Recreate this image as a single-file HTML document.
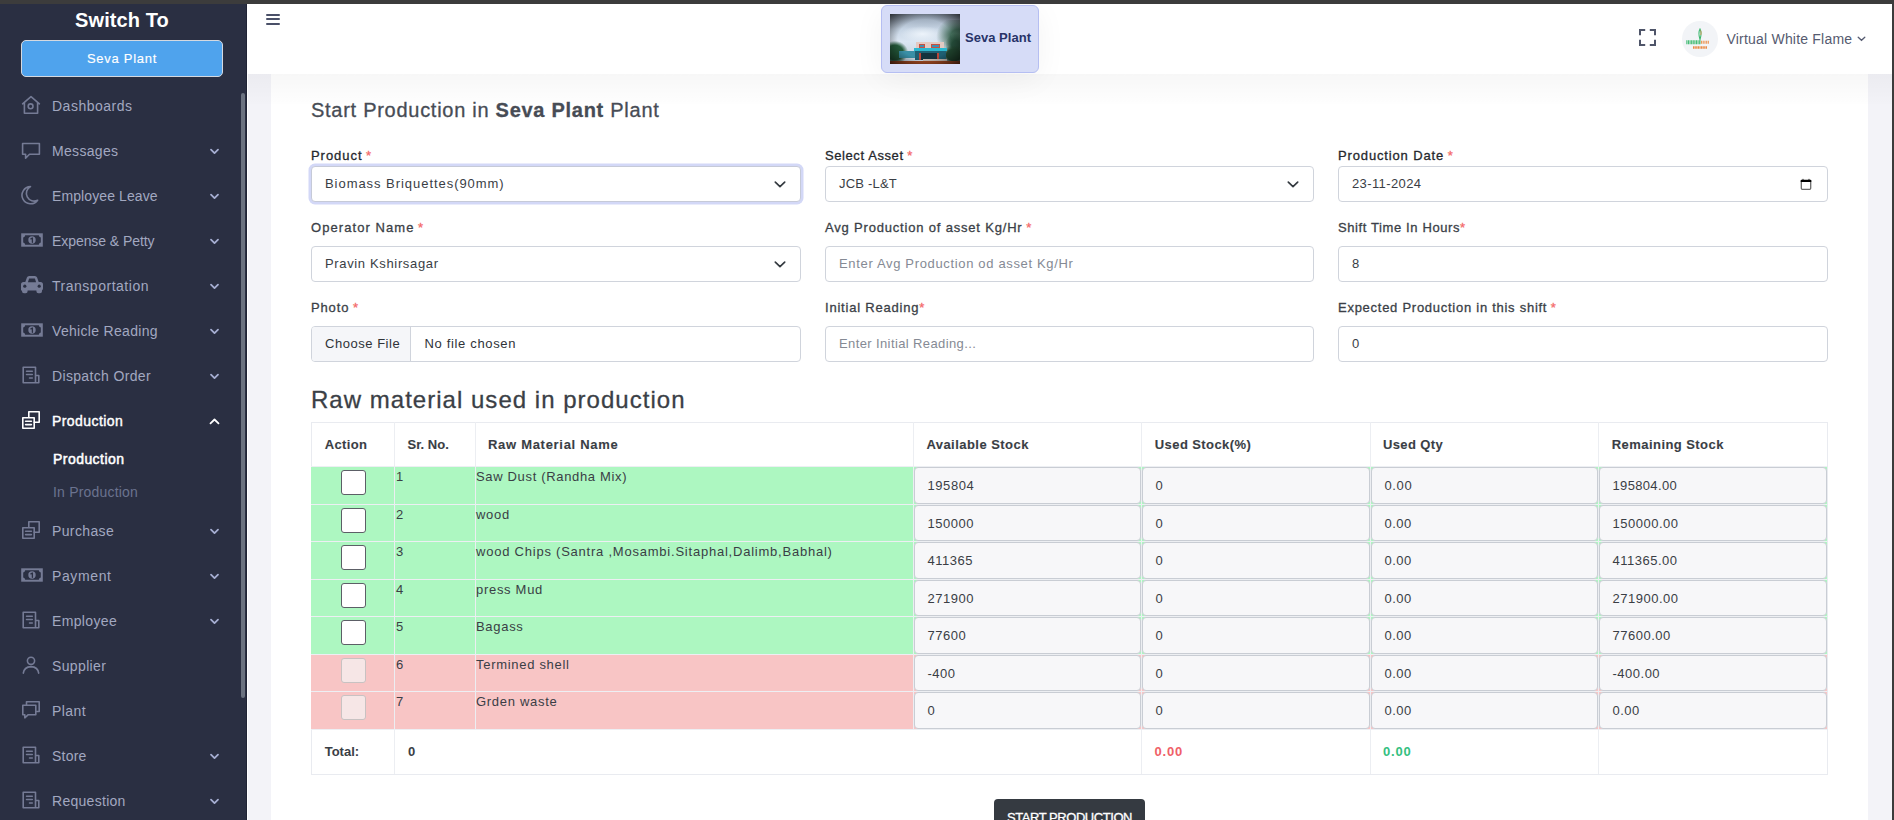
<!DOCTYPE html>
<html><head><meta charset="utf-8">
<style>
*{box-sizing:border-box;margin:0;padding:0}
html,body{width:1894px;height:820px;overflow:hidden;font-family:"Liberation Sans",sans-serif;background:#f3f3f8}
#topbar{position:absolute;left:0;top:0;width:1894px;height:4px;background:#3c3c3c;z-index:50}
#rightbar{position:absolute;left:1892px;top:0;width:2px;height:820px;background:#3c3c3c;z-index:50}
#side{position:absolute;left:0;top:4px;width:247px;height:816px;background:#2a2f42;z-index:10}
#side .title{position:absolute;left:0;width:244px;top:4px;text-align:center;color:#fff;font-weight:bold;font-size:20px;line-height:24px}
#side .btn{position:absolute;left:21px;top:36px;width:202px;height:37px;background:#4fa3ed;border:1px solid #d5d9e0;border-radius:5px;color:#fff;font-size:13px;text-align:center;line-height:35px;-webkit-text-stroke:0.15px #fff}
#side .thumb{position:absolute;left:241px;top:89px;width:4px;height:605px;background:#6b7280;border-radius:2px}
#side .edge{position:absolute;left:246px;top:0;width:1px;height:816px;background:#1f2335}
#wline{position:absolute;left:247px;top:74px;width:1px;height:746px;background:#fff;z-index:4}
.nav{position:absolute;left:0;width:240px;height:30px;color:#a2a8c0;font-size:14px}
.nav svg.ic{position:absolute;left:20px;top:5px;width:24px;height:24px;overflow:visible}
.nav .tx{position:absolute;left:52px;top:7px;white-space:nowrap;line-height:16px}
.nav svg.ch{position:absolute;left:209px;top:12px;width:11px;height:7px}
.nav.act{color:#fff}
.nav.act .tx{font-weight:normal;-webkit-text-stroke:0.4px #fff}
#navwrap{position:absolute;left:0;top:0;width:247px;height:820px;z-index:20}
.sub{position:absolute;left:53px;font-size:14px;line-height:16px;color:#fff;white-space:nowrap}
#header{position:absolute;left:247px;top:4px;width:1645px;height:70px;background:#fff;z-index:5}
#main{position:absolute;left:247px;top:74px;width:1645px;height:746px;background:#f3f3f8}
#card{position:absolute;left:271px;top:74px;width:1597px;height:746px;background:#fff}
#shadow{position:absolute;left:247px;top:74px;width:1645px;height:30px;background:linear-gradient(rgba(0,0,0,0.03),rgba(0,0,0,0.004));z-index:2}

.t{position:absolute;white-space:nowrap}
.req{color:#f46a6a}
.lbl{-webkit-text-stroke:0.3px currentColor}
.ttl{-webkit-text-stroke:0.3px currentColor}
.th{-webkit-text-stroke:0.1px currentColor}
.inp{position:absolute;height:36px;border:1px solid #d0d4dc;border-radius:4px;background:#fff;overflow:hidden}
.inp svg.sel{position:absolute;right:13px;top:13px}
.inp svg.cal{position:absolute;left:461px;top:10.8px}
.fbtn{position:absolute;left:0;top:0;width:99px;height:34px;background:#f5f6f9;border-right:1px solid #d0d4dc}
.tbl{position:absolute;border:1px solid #e9ebf0;background:#fff}
.row{position:absolute;left:311px;width:1516px;border-top:1px solid #edeff3;border-bottom:1px solid #edeff3}
.vl{position:absolute;width:1px;background:#eceef2}
.cb{position:absolute;width:25px;height:25px;border:1px solid #5c5f66;border-radius:3px;background:#fff}
.cb.dis{border-color:#c8c2c2;background:#f6e6e6}
.v0,.v1,.v2,.v3{letter-spacing:0.5px}
.ti{position:absolute;border:1px solid #c9cdd4;border-radius:4px;background:#f7f7f9}
.sbtn{position:absolute;left:994px;top:799px;width:151px;height:30px;background:#353a41;border-radius:4px;color:#fff;font-size:13px}
.sbtn span{position:absolute;left:13px;top:10.5px;line-height:15px;white-space:nowrap;letter-spacing:-0.45px;-webkit-text-stroke:0.3px #fff}
#cont{position:absolute;left:0;top:0;width:1894px;height:820px;z-index:3}

#logobox{position:absolute;left:634px;top:1px;width:158px;height:68px;background:#d6dcf7;border:1px solid #b5bef2;border-radius:6px;z-index:6;box-shadow:0 6px 30px rgba(0,0,0,0.05)}
#plantimg{position:absolute;left:8px;top:8px;width:70px;height:50px;overflow:hidden;background:#9fb4c6}
#plantimg div{position:absolute}
#plantimg .sky{left:0;top:0;width:70px;height:50px;background:linear-gradient(#8e9cad,#c6d4e4 30%,#dbe6f2 55%,#cfdbe6 75%)}
#plantimg .cl{left:10px;top:12px;width:45px;height:16px;background:radial-gradient(ellipse,rgba(240,246,252,0.9),rgba(240,246,252,0) 70%)}
#plantimg .palm{left:46px;top:6px;width:30px;height:36px;background:radial-gradient(ellipse at 75% 45%,rgba(40,85,62,0.85) 25%,rgba(40,80,60,0) 70%)}
#plantimg .palm2{left:56px;top:20px;width:14px;height:22px;background:radial-gradient(ellipse at 70% 50%,#244a38 30%,rgba(30,70,50,0) 75%)}
#plantimg .treeL{left:-4px;top:27px;width:22px;height:23px;background:radial-gradient(ellipse at 40% 50%,#245a3a 45%,rgba(30,80,50,0) 72%)}
#plantimg .treeR{left:52px;top:32px;width:20px;height:18px;background:radial-gradient(ellipse at 60% 50%,#21452f 45%,rgba(30,70,50,0) 75%)}
#plantimg .sblue{left:9px;top:37px;width:16px;height:7px;background:#3a8fa6}
#plantimg .bldtop{left:26px;top:28px;width:28px;height:6px;background:#e3c9c2}
#plantimg .win1{left:29px;top:30px;width:6px;height:4px;background:#3d8fb4;border:1px solid #c8503f}
#plantimg .win2{left:41px;top:30px;width:9px;height:4px;background:#3d8fb4;border:1px solid #c8503f}
#plantimg .bldroof{left:24px;top:33.5px;width:33px;height:3.5px;background:#2cb8d0}
#plantimg .bld{left:25px;top:37px;width:31px;height:9px;background:#1f5f72}
#plantimg .door{left:29px;top:39px;width:20px;height:7px;background:#14323d;border-left:2px solid #b9463a;border-right:2px solid #b9463a}
#plantimg .steps{left:33px;top:45px;width:24px;height:3px;background:#c9bdb4}
#plantimg .ground{left:0;top:47px;width:70px;height:3px;background:#a44a22}
#plantimg .vig{left:0;top:0;width:70px;height:50px;background:radial-gradient(ellipse at 50% 50%,rgba(0,0,0,0) 55%,rgba(0,0,0,0.7) 100%)}
#avatar{position:absolute;left:1435px;top:17px;width:36px;height:36px;border-radius:50%;background:#f2f4f7;overflow:hidden}
#avatar svg{position:absolute;left:0;top:0}
</style><style id="fit">#nv1{letter-spacing:0.500px}
#nv2{letter-spacing:0.312px}
#nv3{letter-spacing:0.100px}
#nv4{letter-spacing:-0.065px}
#nv5{letter-spacing:0.519px}
#nv6{letter-spacing:0.315px}
#nv7{letter-spacing:0.342px}
#nv8{letter-spacing:0.429px}
#nv9{letter-spacing:0.363px}
#nv10{letter-spacing:0.625px}
#nv11{letter-spacing:0.362px}
#nv12{letter-spacing:0.361px}
#nv13{letter-spacing:0.420px}
#nv14{letter-spacing:0.233px}
#nv15{letter-spacing:0.286px}
#sb1{letter-spacing:0.451px}
#sb2{letter-spacing:0.258px}
#swt{letter-spacing:0.091px}
#lb1{letter-spacing:0.948px}
#lb2{letter-spacing:0.587px}
#lb3{letter-spacing:0.855px}
#lb4{letter-spacing:1.067px}
#lb5{letter-spacing:0.814px}
#lb6{letter-spacing:0.609px}
#lb7{letter-spacing:0.854px}
#lb8{letter-spacing:0.794px}
#lb9{letter-spacing:0.734px}
#i1{letter-spacing:0.953px}
#i2{letter-spacing:0.208px}
#i3{letter-spacing:0.384px}
#i4{letter-spacing:0.649px}
#i5{letter-spacing:0.659px}
#i7{letter-spacing:0.533px}
#i7b{letter-spacing:0.662px}
#i8{letter-spacing:0.387px}
#rawt{letter-spacing:1.022px}
#ttl1{letter-spacing:0.725px}
#h0{letter-spacing:0.349px}
#h1{letter-spacing:0.002px}
#h2{letter-spacing:0.700px}
#h3{letter-spacing:0.455px}
#h4{letter-spacing:0.414px}
#h5{letter-spacing:0.375px}
#h6{letter-spacing:0.438px}
#n0{letter-spacing:0.666px}
#n2{letter-spacing:0.774px}
#uname{letter-spacing:0.205px}
#v0_0{letter-spacing:0.582px}
#v0_3{letter-spacing:0.343px}
#v0_2{letter-spacing:0.629px}
#sevab{letter-spacing:0.714px}
#hsp{letter-spacing:0.026px}</style></head><body>
<div id="topbar"></div><div id="rightbar"></div>
<div id="side">
  <div class="title"><span id="swt">Switch To</span></div>
  <div class="btn"><span id="sevab">Seva Plant</span></div>
  <div class="thumb"></div><div class="edge"></div>
</div>
<div id="navwrap">
<div class="nav" style="top:0"><svg class="ic" style="left:19px;top:93px" width="24" height="24" viewBox="0 0 24 24" fill="none" stroke="#757b95" stroke-width="1.6" stroke-linejoin="round" stroke-linecap="round"><path d="M3.6 10.8 L12 3.6 L20.4 10.8 M5.4 9.2 V20.3 H18.6 V9.2"/><circle cx="11.6" cy="13.3" r="2.4"/></svg><span id="nv1" class="tx" style="top:97.8px">Dashboards</span></div>
<div class="nav" style="top:0"><svg class="ic" style="left:19px;top:138.5px" width="24" height="24" viewBox="0 0 24 24" fill="none" stroke="#757b95" stroke-width="1.6" stroke-linejoin="round" stroke-linecap="round"><path d="M3.6 4.5 H20.4 V15.3 H10.5 L6.6 19.2 V15.3 H3.6 Z"/></svg><span id="nv2" class="tx" style="top:142.8px">Messages</span><svg class="ch" style="top:148.1px" viewBox="0 0 11 7" fill="none" stroke="#a6aed2" stroke-width="1.8" stroke-linecap="round" stroke-linejoin="round"><path d="M2 1.6 L5.5 5.1 L9 1.6"/></svg></div>
<div class="nav" style="top:0"><svg class="ic" style="left:17px;top:183px" width="24" height="24" viewBox="0 0 24 24" fill="none" stroke="#757b95" stroke-width="1.6" stroke-linejoin="round" stroke-linecap="round"><path d="M13.5 3.6 A8.6 8.6 0 1 0 20.6 17.2 A7 7 0 0 1 13.5 3.6 Z"/></svg><span id="nv3" class="tx" style="top:187.8px">Employee Leave</span><svg class="ch" style="top:193.1px" viewBox="0 0 11 7" fill="none" stroke="#a6aed2" stroke-width="1.8" stroke-linecap="round" stroke-linejoin="round"><path d="M2 1.6 L5.5 5.1 L9 1.6"/></svg></div>
<div class="nav" style="top:0"><svg class="ic" style="left:19.5px;top:228px" width="24" height="24" viewBox="0 0 24 24" fill="none" stroke="#757b95" stroke-width="1.6" stroke-linejoin="round" stroke-linecap="round"><rect x="1.2" y="5.3" width="21.6" height="13.4" fill="#757b95" stroke="none"/><path d="M5.2 7.3 H18.8 Q19 9.3 20.8 9.5 V14.5 Q19 14.7 18.8 16.7 H5.2 Q5 14.7 3.2 14.5 V9.5 Q5 9.3 5.2 7.3 Z" fill="#2a2f42" stroke="none"/><circle cx="12" cy="12" r="3.7" fill="#757b95" stroke="none"/><path d="M10.9 10.9 L12.4 10 V14.3" stroke="#2a2f42" stroke-width="1.3"/></svg><span id="nv4" class="tx" style="top:232.8px">Expense &amp; Petty</span><svg class="ch" style="top:238.1px" viewBox="0 0 11 7" fill="none" stroke="#a6aed2" stroke-width="1.8" stroke-linecap="round" stroke-linejoin="round"><path d="M2 1.6 L5.5 5.1 L9 1.6"/></svg></div>
<div class="nav" style="top:0"><svg class="ic" style="left:20px;top:272px" width="24" height="24" viewBox="0 0 24 24" fill="none" stroke="#757b95" stroke-width="1.6" stroke-linejoin="round" stroke-linecap="round"><path d="M5.3 10 L6.9 5.6 Q7.4 3.9 9.2 3.9 H14.8 Q16.6 3.9 17.1 5.6 L18.7 10 H20.5 Q23 10 23 12.5 V16.5 Q23 18.5 21 18.5 H1 V12.5 Q1 10 3.5 10 Z" fill="#757b95" stroke="none"/><path d="M2 18 H7.6 V19.3 Q7.6 21.2 5.6 21.2 H4 Q2 21.2 2 19.3 Z M16.4 18 H22 V19.3 Q22 21.2 20 21.2 H18.4 Q16.4 21.2 16.4 19.3 Z" fill="#757b95" stroke="none"/><path d="M7.9 10.2 L9.1 6.4 H14.9 L16.1 10.2 Z" fill="#2a2f42" stroke="none"/><circle cx="4.8" cy="14.2" r="1.6" fill="#2a2f42" stroke="none"/><circle cx="19.2" cy="14.2" r="1.6" fill="#2a2f42" stroke="none"/></svg><span id="nv5" class="tx" style="top:277.8px">Transportation</span><svg class="ch" style="top:283.1px" viewBox="0 0 11 7" fill="none" stroke="#a6aed2" stroke-width="1.8" stroke-linecap="round" stroke-linejoin="round"><path d="M2 1.6 L5.5 5.1 L9 1.6"/></svg></div>
<div class="nav" style="top:0"><svg class="ic" style="left:19.5px;top:318px" width="24" height="24" viewBox="0 0 24 24" fill="none" stroke="#757b95" stroke-width="1.6" stroke-linejoin="round" stroke-linecap="round"><rect x="1.2" y="5.3" width="21.6" height="13.4" fill="#757b95" stroke="none"/><path d="M5.2 7.3 H18.8 Q19 9.3 20.8 9.5 V14.5 Q19 14.7 18.8 16.7 H5.2 Q5 14.7 3.2 14.5 V9.5 Q5 9.3 5.2 7.3 Z" fill="#2a2f42" stroke="none"/><circle cx="12" cy="12" r="3.7" fill="#757b95" stroke="none"/><path d="M10.9 10.9 L12.4 10 V14.3" stroke="#2a2f42" stroke-width="1.3"/></svg><span id="nv6" class="tx" style="top:322.8px">Vehicle Reading</span><svg class="ch" style="top:328.1px" viewBox="0 0 11 7" fill="none" stroke="#a6aed2" stroke-width="1.8" stroke-linecap="round" stroke-linejoin="round"><path d="M2 1.6 L5.5 5.1 L9 1.6"/></svg></div>
<div class="nav" style="top:0"><svg class="ic" style="left:19px;top:363px" width="24" height="24" viewBox="0 0 24 24" fill="none" stroke="#757b95" stroke-width="1.6" stroke-linejoin="round" stroke-linecap="round"><path d="M16.5 12.5 H19.8 V19.8 H4.2 V4.2 H16.5 V19.8" /><path d="M7.5 8.2 H13.3 M7.5 11.5 H13.3 M10.5 15 H13.3" stroke-width="1.5"/></svg><span id="nv7" class="tx" style="top:367.8px">Dispatch Order</span><svg class="ch" style="top:373.1px" viewBox="0 0 11 7" fill="none" stroke="#a6aed2" stroke-width="1.8" stroke-linecap="round" stroke-linejoin="round"><path d="M2 1.6 L5.5 5.1 L9 1.6"/></svg></div>
<div class="nav act" style="top:0"><svg class="ic" style="left:19px;top:408px" width="24" height="24" viewBox="0 0 24 24" fill="none" stroke="#fff" stroke-width="1.6" stroke-linejoin="round" stroke-linecap="round"><path d="M9.8 8.8 V3.8 H20.2 V14.2 H15.2"/><rect x="3.8" y="9.8" width="11.4" height="10.4"/><path d="M6.6 13.3 H12.4 M6.6 16.6 H12.4" stroke-width="1.6"/></svg><span id="nv8" class="tx" style="top:412.8px">Production</span><svg class="ch" style="top:418.1px" viewBox="0 0 11 7" fill="none" stroke="#fff" stroke-width="1.8" stroke-linecap="round" stroke-linejoin="round"><path d="M1.5 5.3 L5.5 1.5 L9.5 5.3"/></svg></div>
<div class="nav" style="top:0"><svg class="ic" style="left:19px;top:518px" width="24" height="24" viewBox="0 0 24 24" fill="none" stroke="#757b95" stroke-width="1.6" stroke-linejoin="round" stroke-linecap="round"><path d="M9.8 8.8 V3.8 H20.2 V14.2 H15.2"/><rect x="3.8" y="9.8" width="11.4" height="10.4"/><path d="M6.6 13.3 H12.4 M6.6 16.6 H12.4" stroke-width="1.6"/></svg><span id="nv9" class="tx" style="top:522.8px">Purchase</span><svg class="ch" style="top:528.1px" viewBox="0 0 11 7" fill="none" stroke="#a6aed2" stroke-width="1.8" stroke-linecap="round" stroke-linejoin="round"><path d="M2 1.6 L5.5 5.1 L9 1.6"/></svg></div>
<div class="nav" style="top:0"><svg class="ic" style="left:19.5px;top:563px" width="24" height="24" viewBox="0 0 24 24" fill="none" stroke="#757b95" stroke-width="1.6" stroke-linejoin="round" stroke-linecap="round"><rect x="1.2" y="5.3" width="21.6" height="13.4" fill="#757b95" stroke="none"/><path d="M5.2 7.3 H18.8 Q19 9.3 20.8 9.5 V14.5 Q19 14.7 18.8 16.7 H5.2 Q5 14.7 3.2 14.5 V9.5 Q5 9.3 5.2 7.3 Z" fill="#2a2f42" stroke="none"/><circle cx="12" cy="12" r="3.7" fill="#757b95" stroke="none"/><path d="M10.9 10.9 L12.4 10 V14.3" stroke="#2a2f42" stroke-width="1.3"/></svg><span id="nv10" class="tx" style="top:567.8px">Payment</span><svg class="ch" style="top:573.1px" viewBox="0 0 11 7" fill="none" stroke="#a6aed2" stroke-width="1.8" stroke-linecap="round" stroke-linejoin="round"><path d="M2 1.6 L5.5 5.1 L9 1.6"/></svg></div>
<div class="nav" style="top:0"><svg class="ic" style="left:19px;top:608px" width="24" height="24" viewBox="0 0 24 24" fill="none" stroke="#757b95" stroke-width="1.6" stroke-linejoin="round" stroke-linecap="round"><path d="M16.5 12.5 H19.8 V19.8 H4.2 V4.2 H16.5 V19.8" /><path d="M7.5 8.2 H13.3 M7.5 11.5 H13.3 M10.5 15 H13.3" stroke-width="1.5"/></svg><span id="nv11" class="tx" style="top:612.8px">Employee</span><svg class="ch" style="top:618.1px" viewBox="0 0 11 7" fill="none" stroke="#a6aed2" stroke-width="1.8" stroke-linecap="round" stroke-linejoin="round"><path d="M2 1.6 L5.5 5.1 L9 1.6"/></svg></div>
<div class="nav" style="top:0"><svg class="ic" style="left:19px;top:653px" width="24" height="24" viewBox="0 0 24 24" fill="none" stroke="#757b95" stroke-width="1.6" stroke-linejoin="round" stroke-linecap="round"><circle cx="12" cy="7.8" r="3.6"/><path d="M4.3 20.2 Q5 14 12 13.6 Q19 14 19.7 20.2"/></svg><span id="nv12" class="tx" style="top:657.8px">Supplier</span></div>
<div class="nav" style="top:0"><svg class="ic" style="left:19px;top:698px" width="24" height="24" viewBox="0 0 24 24" fill="none" stroke="#757b95" stroke-width="1.6" stroke-linejoin="round" stroke-linecap="round"><path d="M7.5 6.8 V3.8 H20.2 V13.5 H17.5"/><path d="M3.8 7.2 H16.8 V16.8 H9 L5.8 19.8 V16.8 H3.8 Z"/></svg><span id="nv13" class="tx" style="top:702.8px">Plant</span></div>
<div class="nav" style="top:0"><svg class="ic" style="left:19px;top:743px" width="24" height="24" viewBox="0 0 24 24" fill="none" stroke="#757b95" stroke-width="1.6" stroke-linejoin="round" stroke-linecap="round"><path d="M16.5 12.5 H19.8 V19.8 H4.2 V4.2 H16.5 V19.8" /><path d="M7.5 8.2 H13.3 M7.5 11.5 H13.3 M10.5 15 H13.3" stroke-width="1.5"/></svg><span id="nv14" class="tx" style="top:747.8px">Store</span><svg class="ch" style="top:753.1px" viewBox="0 0 11 7" fill="none" stroke="#a6aed2" stroke-width="1.8" stroke-linecap="round" stroke-linejoin="round"><path d="M2 1.6 L5.5 5.1 L9 1.6"/></svg></div>
<div class="nav" style="top:0"><svg class="ic" style="left:19px;top:788px" width="24" height="24" viewBox="0 0 24 24" fill="none" stroke="#757b95" stroke-width="1.6" stroke-linejoin="round" stroke-linecap="round"><path d="M16.5 12.5 H19.8 V19.8 H4.2 V4.2 H16.5 V19.8" /><path d="M7.5 8.2 H13.3 M7.5 11.5 H13.3 M10.5 15 H13.3" stroke-width="1.5"/></svg><span id="nv15" class="tx" style="top:792.8px">Requestion</span><svg class="ch" style="top:798.1px" viewBox="0 0 11 7" fill="none" stroke="#a6aed2" stroke-width="1.8" stroke-linecap="round" stroke-linejoin="round"><path d="M2 1.6 L5.5 5.1 L9 1.6"/></svg></div>
<span id="sb1" class="sub" style="top:451.2px;-webkit-text-stroke:0.5px #fff">Production</span>
<span id="sb2" class="sub" style="top:484px;color:#6b738f;letter-spacing:0.2px">In Production</span>
</div>
<div id="header">
  <!-- hamburger -->
  <div style="position:absolute;left:19px;top:10px;width:14px;height:2px;background:#4a5068;border-radius:1px"></div>
  <div style="position:absolute;left:19px;top:14px;width:14px;height:2px;background:#4a5068;border-radius:1px"></div>
  <div style="position:absolute;left:19px;top:19px;width:14px;height:2px;background:#4a5068;border-radius:1px"></div>
  <div id="logobox">
    <div id="plantimg">
      <div class="sky"></div><div class="cl"></div><div class="palm"></div><div class="palm2"></div><div class="treeL"></div><div class="treeR"></div><div class="sblue"></div><div class="bldtop"></div><div class="win1"></div><div class="win2"></div><div class="bldroof"></div><div class="bld"></div><div class="door"></div><div class="steps"></div><div class="ground"></div><div class="vig"></div>
    </div>
    <span class="t" id="hsp" style="left:83px;top:24.1px;font-size:13px;line-height:16px;font-weight:bold;color:#283368">Seva Plant</span>
  </div>
  <svg style="position:absolute;left:1392px;top:25px" width="17" height="17" viewBox="0 0 17 17" fill="none" stroke="#4f5569" stroke-width="2"><path d="M1 6.2 V1 H6.2 M10.8 1 H16 V6.2 M16 10.8 V16 H10.8 M6.2 16 H1 V10.8"/></svg>
  <div id="avatar">
    <svg width="36" height="36" viewBox="0 0 36 36">
      <path d="M18 8 C16.6 10.5 16.4 13.5 18 18.5 C19.6 13.5 19.4 10.5 18 8 Z" fill="none" stroke="#3cb86e" stroke-width="1.1"/>
      <path d="M18.5 9.5 C19.3 11 19.2 12.5 18.7 14" fill="none" stroke="#e8843a" stroke-width="0.7"/>
      <line x1="4.3" y1="21.2" x2="19" y2="21.2" stroke="#46bd76" stroke-width="4" stroke-dasharray="1.1 0.5"/>
      <line x1="19" y1="21.3" x2="27.5" y2="21.3" stroke="#ec9858" stroke-width="3" stroke-dasharray="1.1 0.6"/>
      <line x1="11" y1="26.5" x2="25" y2="26.5" stroke="#e98a45" stroke-width="2.6" stroke-dasharray="1.2 0.4"/>
    </svg>
  </div>
  <span class="t" id="uname" style="left:1479.5px;top:26.8px;font-size:14px;line-height:16px;color:#565b70">Virtual White Flame</span>
  <svg style="position:absolute;left:1610px;top:32px" width="9" height="6" viewBox="0 0 9 6" fill="none" stroke="#565b70" stroke-width="1.3" stroke-linecap="round"><path d="M1.2 1.2 L4.5 4.3 L7.8 1.2"/></svg>
</div>
<div id="main"></div>
<div id="card"></div><div id="wline"></div><div id="shadow"></div>
<div id="cont">
<!--MAIN-->
<span class="t ttl" style="left:311px;top:98.27px;font-size:20px;line-height:24px;color:#474c55"><span id="ttl1">Start Production in <b>Seva Plant</b> Plant</span></span>
<span class="t lbl" style="left:311px;top:147.79px;font-size:13px;line-height:16px;color:#25282d"><span id="lb1">Product</span> <span class="req">*</span></span>
<span class="t lbl" style="left:825px;top:147.79px;font-size:13px;line-height:16px;color:#25282d"><span id="lb2">Select Asset</span> <span class="req">*</span></span>
<span class="t lbl" style="left:1338px;top:147.79px;font-size:13px;line-height:16px;color:#25282d"><span id="lb3">Production Date</span> <span class="req">*</span></span>
<span class="t lbl" style="left:311px;top:219.69px;font-size:13px;line-height:16px;color:#3b3f47"><span id="lb4">Operator Name</span> <span class="req">*</span></span>
<span class="t lbl" style="left:825px;top:219.69px;font-size:13px;line-height:16px;color:#3b3f47"><span id="lb5">Avg Production of asset Kg/Hr</span> <span class="req">*</span></span>
<span class="t lbl" style="left:1338px;top:219.69px;font-size:13px;line-height:16px;color:#3b3f47"><span id="lb6">Shift Time In Hours</span><span class="req">*</span></span>
<span class="t lbl" style="left:311px;top:299.69px;font-size:13px;line-height:16px;color:#3b3f47"><span id="lb7">Photo</span> <span class="req">*</span></span>
<span class="t lbl" style="left:825px;top:299.69px;font-size:13px;line-height:16px;color:#3b3f47"><span id="lb8">Initial Reading</span><span class="req">*</span></span>
<span class="t lbl" style="left:1338px;top:299.69px;font-size:13px;line-height:16px;color:#3b3f47"><span id="lb9">Expected Production in this shift</span> <span class="req">*</span></span>
<div class="inp" style="left:311px;top:166px;width:490px;border-color:#c6cad8;box-shadow:0 0 0 2.5px #d3d8f7"><span class="t " style="left:13px;top:9.49px;font-size:13px;line-height:16px;color:#3a3e45"><span id="i1">Biomass Briquettes(90mm)</span></span><svg class="sel" width="14" height="9" viewBox="0 0 14 9" fill="none" stroke="#343a40" stroke-width="1.7" stroke-linecap="round" stroke-linejoin="round"><path d="M2.3 2.2 L7 6.6 L11.7 2.2"/></svg></div>
<div class="inp" style="left:825px;top:166px;width:489px;"><span class="t " style="left:13px;top:9.49px;font-size:13px;line-height:16px;color:#3a3e45"><span id="i2">JCB -L&amp;T</span></span><svg class="sel" width="14" height="9" viewBox="0 0 14 9" fill="none" stroke="#343a40" stroke-width="1.7" stroke-linecap="round" stroke-linejoin="round"><path d="M2.3 2.2 L7 6.6 L11.7 2.2"/></svg></div>
<div class="inp" style="left:1338px;top:166px;width:490px;"><span class="t " style="left:13px;top:9.49px;font-size:13px;line-height:16px;color:#3a3e45"><span id="i3">23-11-2024</span></span><svg class="cal" width="12" height="12" viewBox="0 0 12 12"><path d="M1.3 3.8 V10.3 Q1.3 11.3 2.3 11.3 H9.7 Q10.7 11.3 10.7 10.3 V3.8" fill="none" stroke="#6a6a6a" stroke-width="1.3"/><path d="M0.6 2.6 Q0.6 1.8 1.6 1.8 H2.4 L3 0.5 L3.6 1.8 H8.4 L9 0.5 L9.6 1.8 H10.4 Q11.4 1.8 11.4 2.6 V4 H0.6 Z" fill="#000"/></svg></div>
<div class="inp" style="left:311px;top:246px;width:490px;"><span class="t " style="left:13px;top:9.49px;font-size:13px;line-height:16px;color:#3a3e45"><span id="i4">Pravin Kshirsagar</span></span><svg class="sel" width="14" height="9" viewBox="0 0 14 9" fill="none" stroke="#343a40" stroke-width="1.7" stroke-linecap="round" stroke-linejoin="round"><path d="M2.3 2.2 L7 6.6 L11.7 2.2"/></svg></div>
<div class="inp" style="left:825px;top:246px;width:489px;"><span class="t " style="left:13px;top:9.49px;font-size:13px;line-height:16px;color:#858a94"><span id="i5">Enter Avg Production od asset Kg/Hr</span></span></div>
<div class="inp" style="left:1338px;top:246px;width:490px;"><span class="t " style="left:13px;top:9.49px;font-size:13px;line-height:16px;color:#3a3e45"><span id="i6">8</span></span></div>
<div class="inp" style="left:311px;top:326px;width:490px;"><div class="fbtn"></div><span class="t " style="left:13px;top:9.49px;font-size:13px;line-height:16px;color:#2f3338"><span id="i7">Choose File</span></span><span class="t " style="left:112.5px;top:9.49px;font-size:13px;line-height:16px;color:#2f3338"><span id="i7b">No file chosen</span></span></div>
<div class="inp" style="left:825px;top:326px;width:489px;"><span class="t " style="left:13px;top:9.49px;font-size:13px;line-height:16px;color:#858a94"><span id="i8">Enter Initial Reading...</span></span></div>
<div class="inp" style="left:1338px;top:326px;width:490px;"><span class="t " style="left:13px;top:9.49px;font-size:13px;line-height:16px;color:#3a3e45"><span id="i9">0</span></span></div>
<span class="t ttl" style="left:311px;top:384.68px;font-size:24px;line-height:29px;color:#3b3f46"><span id="rawt">Raw material used in production</span></span>
<div class="tbl" style="left:311px;top:422px;width:1517px;height:353px"></div>
<div class="vl" style="left:394px;top:422px;height:44px"></div>
<div class="vl" style="left:475px;top:422px;height:44px"></div>
<div class="vl" style="left:913px;top:422px;height:44px"></div>
<div class="vl" style="left:1141px;top:422px;height:44px"></div>
<div class="vl" style="left:1370px;top:422px;height:44px"></div>
<div class="vl" style="left:1598px;top:422px;height:44px"></div>
<span class="t th" style="left:324.7px;top:437.09px;font-size:13px;line-height:16px;color:#3a3e45;font-weight:bold"><span id="h0">Action</span></span>
<span class="t th" style="left:407.6px;top:437.09px;font-size:13px;line-height:16px;color:#3a3e45;font-weight:bold"><span id="h1">Sr. No.</span></span>
<span class="t th" style="left:488px;top:437.09px;font-size:13px;line-height:16px;color:#3a3e45;font-weight:bold"><span id="h2">Raw Material Name</span></span>
<span class="t th" style="left:926.4px;top:437.09px;font-size:13px;line-height:16px;color:#3a3e45;font-weight:bold"><span id="h3">Available Stock</span></span>
<span class="t th" style="left:1154.8px;top:437.09px;font-size:13px;line-height:16px;color:#3a3e45;font-weight:bold"><span id="h4">Used Stock(%)</span></span>
<span class="t th" style="left:1383px;top:437.09px;font-size:13px;line-height:16px;color:#3a3e45;font-weight:bold"><span id="h5">Used Qty</span></span>
<span class="t th" style="left:1611.8px;top:437.09px;font-size:13px;line-height:16px;color:#3a3e45;font-weight:bold"><span id="h6">Remaining Stock</span></span>
<div class="row" style="top:466px;height:39px;background:#adf7c1"></div>
<div class="vl" style="left:394px;top:466px;height:38px"></div>
<div class="vl" style="left:475px;top:466px;height:38px"></div>
<div class="vl" style="left:913px;top:466px;height:38px"></div>
<div class="vl" style="left:1141px;top:466px;height:38px"></div>
<div class="vl" style="left:1370px;top:466px;height:38px"></div>
<div class="vl" style="left:1598px;top:466px;height:38px"></div>
<div class="cb" style="left:341px;top:470px"></div>
<span class="t " style="left:396px;top:469.49px;font-size:13px;line-height:16px;color:#3a3e45;letter-spacing:0.5px">1</span>
<span class="t " style="left:476px;top:469.49px;font-size:13px;line-height:16px;color:#3a3e45;letter-spacing:0.7px"><span id="n0">Saw Dust (Randha Mix)</span></span>
<div class="ti" style="left:914px;top:467px;width:227px;height:37px"><span class="t " style="left:12.5px;top:10.19px;font-size:13px;line-height:16px;color:#3a3e45"><span class="v0" id="v0_0">195804</span></span></div>
<div class="ti" style="left:1142px;top:467px;width:228px;height:37px"><span class="t " style="left:12.5px;top:10.19px;font-size:13px;line-height:16px;color:#3a3e45"><span class="v1" id="v0_1">0</span></span></div>
<div class="ti" style="left:1371px;top:467px;width:227px;height:37px"><span class="t " style="left:12.5px;top:10.19px;font-size:13px;line-height:16px;color:#3a3e45"><span class="v2" id="v0_2">0.00</span></span></div>
<div class="ti" style="left:1599px;top:467px;width:228px;height:37px"><span class="t " style="left:12.5px;top:10.19px;font-size:13px;line-height:16px;color:#3a3e45"><span class="v3" id="v0_3">195804.00</span></span></div>
<div class="row" style="top:504px;height:38px;background:#adf7c1"></div>
<div class="vl" style="left:394px;top:504px;height:37px"></div>
<div class="vl" style="left:475px;top:504px;height:37px"></div>
<div class="vl" style="left:913px;top:504px;height:37px"></div>
<div class="vl" style="left:1141px;top:504px;height:37px"></div>
<div class="vl" style="left:1370px;top:504px;height:37px"></div>
<div class="vl" style="left:1598px;top:504px;height:37px"></div>
<div class="cb" style="left:341px;top:508px"></div>
<span class="t " style="left:396px;top:507.49px;font-size:13px;line-height:16px;color:#3a3e45;letter-spacing:0.5px">2</span>
<span class="t " style="left:476px;top:507.49px;font-size:13px;line-height:16px;color:#3a3e45;letter-spacing:0.7px"><span id="n1">wood</span></span>
<div class="ti" style="left:914px;top:505px;width:227px;height:36px"><span class="t " style="left:12.5px;top:9.69px;font-size:13px;line-height:16px;color:#3a3e45"><span class="v0" id="v1_0">150000</span></span></div>
<div class="ti" style="left:1142px;top:505px;width:228px;height:36px"><span class="t " style="left:12.5px;top:9.69px;font-size:13px;line-height:16px;color:#3a3e45"><span class="v1" id="v1_1">0</span></span></div>
<div class="ti" style="left:1371px;top:505px;width:227px;height:36px"><span class="t " style="left:12.5px;top:9.69px;font-size:13px;line-height:16px;color:#3a3e45"><span class="v2" id="v1_2">0.00</span></span></div>
<div class="ti" style="left:1599px;top:505px;width:228px;height:36px"><span class="t " style="left:12.5px;top:9.69px;font-size:13px;line-height:16px;color:#3a3e45"><span class="v3" id="v1_3">150000.00</span></span></div>
<div class="row" style="top:541px;height:39px;background:#adf7c1"></div>
<div class="vl" style="left:394px;top:541px;height:38px"></div>
<div class="vl" style="left:475px;top:541px;height:38px"></div>
<div class="vl" style="left:913px;top:541px;height:38px"></div>
<div class="vl" style="left:1141px;top:541px;height:38px"></div>
<div class="vl" style="left:1370px;top:541px;height:38px"></div>
<div class="vl" style="left:1598px;top:541px;height:38px"></div>
<div class="cb" style="left:341px;top:545px"></div>
<span class="t " style="left:396px;top:544.49px;font-size:13px;line-height:16px;color:#3a3e45;letter-spacing:0.5px">3</span>
<span class="t " style="left:476px;top:544.49px;font-size:13px;line-height:16px;color:#3a3e45;letter-spacing:0.7px"><span id="n2">wood Chips (Santra ,Mosambi.Sitaphal,Dalimb,Babhal)</span></span>
<div class="ti" style="left:914px;top:542px;width:227px;height:37px"><span class="t " style="left:12.5px;top:10.19px;font-size:13px;line-height:16px;color:#3a3e45"><span class="v0" id="v2_0">411365</span></span></div>
<div class="ti" style="left:1142px;top:542px;width:228px;height:37px"><span class="t " style="left:12.5px;top:10.19px;font-size:13px;line-height:16px;color:#3a3e45"><span class="v1" id="v2_1">0</span></span></div>
<div class="ti" style="left:1371px;top:542px;width:227px;height:37px"><span class="t " style="left:12.5px;top:10.19px;font-size:13px;line-height:16px;color:#3a3e45"><span class="v2" id="v2_2">0.00</span></span></div>
<div class="ti" style="left:1599px;top:542px;width:228px;height:37px"><span class="t " style="left:12.5px;top:10.19px;font-size:13px;line-height:16px;color:#3a3e45"><span class="v3" id="v2_3">411365.00</span></span></div>
<div class="row" style="top:579px;height:38px;background:#adf7c1"></div>
<div class="vl" style="left:394px;top:579px;height:37px"></div>
<div class="vl" style="left:475px;top:579px;height:37px"></div>
<div class="vl" style="left:913px;top:579px;height:37px"></div>
<div class="vl" style="left:1141px;top:579px;height:37px"></div>
<div class="vl" style="left:1370px;top:579px;height:37px"></div>
<div class="vl" style="left:1598px;top:579px;height:37px"></div>
<div class="cb" style="left:341px;top:583px"></div>
<span class="t " style="left:396px;top:582.49px;font-size:13px;line-height:16px;color:#3a3e45;letter-spacing:0.5px">4</span>
<span class="t " style="left:476px;top:582.49px;font-size:13px;line-height:16px;color:#3a3e45;letter-spacing:0.7px"><span id="n3">press Mud</span></span>
<div class="ti" style="left:914px;top:580px;width:227px;height:36px"><span class="t " style="left:12.5px;top:9.69px;font-size:13px;line-height:16px;color:#3a3e45"><span class="v0" id="v3_0">271900</span></span></div>
<div class="ti" style="left:1142px;top:580px;width:228px;height:36px"><span class="t " style="left:12.5px;top:9.69px;font-size:13px;line-height:16px;color:#3a3e45"><span class="v1" id="v3_1">0</span></span></div>
<div class="ti" style="left:1371px;top:580px;width:227px;height:36px"><span class="t " style="left:12.5px;top:9.69px;font-size:13px;line-height:16px;color:#3a3e45"><span class="v2" id="v3_2">0.00</span></span></div>
<div class="ti" style="left:1599px;top:580px;width:228px;height:36px"><span class="t " style="left:12.5px;top:9.69px;font-size:13px;line-height:16px;color:#3a3e45"><span class="v3" id="v3_3">271900.00</span></span></div>
<div class="row" style="top:616px;height:39px;background:#adf7c1"></div>
<div class="vl" style="left:394px;top:616px;height:38px"></div>
<div class="vl" style="left:475px;top:616px;height:38px"></div>
<div class="vl" style="left:913px;top:616px;height:38px"></div>
<div class="vl" style="left:1141px;top:616px;height:38px"></div>
<div class="vl" style="left:1370px;top:616px;height:38px"></div>
<div class="vl" style="left:1598px;top:616px;height:38px"></div>
<div class="cb" style="left:341px;top:620px"></div>
<span class="t " style="left:396px;top:619.49px;font-size:13px;line-height:16px;color:#3a3e45;letter-spacing:0.5px">5</span>
<span class="t " style="left:476px;top:619.49px;font-size:13px;line-height:16px;color:#3a3e45;letter-spacing:0.7px"><span id="n4">Bagass</span></span>
<div class="ti" style="left:914px;top:617px;width:227px;height:37px"><span class="t " style="left:12.5px;top:10.19px;font-size:13px;line-height:16px;color:#3a3e45"><span class="v0" id="v4_0">77600</span></span></div>
<div class="ti" style="left:1142px;top:617px;width:228px;height:37px"><span class="t " style="left:12.5px;top:10.19px;font-size:13px;line-height:16px;color:#3a3e45"><span class="v1" id="v4_1">0</span></span></div>
<div class="ti" style="left:1371px;top:617px;width:227px;height:37px"><span class="t " style="left:12.5px;top:10.19px;font-size:13px;line-height:16px;color:#3a3e45"><span class="v2" id="v4_2">0.00</span></span></div>
<div class="ti" style="left:1599px;top:617px;width:228px;height:37px"><span class="t " style="left:12.5px;top:10.19px;font-size:13px;line-height:16px;color:#3a3e45"><span class="v3" id="v4_3">77600.00</span></span></div>
<div class="row" style="top:654px;height:38px;background:#f8c5c5"></div>
<div class="vl" style="left:394px;top:654px;height:37px"></div>
<div class="vl" style="left:475px;top:654px;height:37px"></div>
<div class="vl" style="left:913px;top:654px;height:37px"></div>
<div class="vl" style="left:1141px;top:654px;height:37px"></div>
<div class="vl" style="left:1370px;top:654px;height:37px"></div>
<div class="vl" style="left:1598px;top:654px;height:37px"></div>
<div class="cb dis" style="left:341px;top:658px"></div>
<span class="t " style="left:396px;top:657.49px;font-size:13px;line-height:16px;color:#3a3e45;letter-spacing:0.5px">6</span>
<span class="t " style="left:476px;top:657.49px;font-size:13px;line-height:16px;color:#3a3e45;letter-spacing:0.7px"><span id="n5">Termined shell</span></span>
<div class="ti" style="left:914px;top:655px;width:227px;height:36px"><span class="t " style="left:12.5px;top:9.69px;font-size:13px;line-height:16px;color:#3a3e45"><span class="v0" id="v5_0">-400</span></span></div>
<div class="ti" style="left:1142px;top:655px;width:228px;height:36px"><span class="t " style="left:12.5px;top:9.69px;font-size:13px;line-height:16px;color:#3a3e45"><span class="v1" id="v5_1">0</span></span></div>
<div class="ti" style="left:1371px;top:655px;width:227px;height:36px"><span class="t " style="left:12.5px;top:9.69px;font-size:13px;line-height:16px;color:#3a3e45"><span class="v2" id="v5_2">0.00</span></span></div>
<div class="ti" style="left:1599px;top:655px;width:228px;height:36px"><span class="t " style="left:12.5px;top:9.69px;font-size:13px;line-height:16px;color:#3a3e45"><span class="v3" id="v5_3">-400.00</span></span></div>
<div class="row" style="top:691px;height:39px;background:#f8c5c5"></div>
<div class="vl" style="left:394px;top:691px;height:38px"></div>
<div class="vl" style="left:475px;top:691px;height:38px"></div>
<div class="vl" style="left:913px;top:691px;height:38px"></div>
<div class="vl" style="left:1141px;top:691px;height:38px"></div>
<div class="vl" style="left:1370px;top:691px;height:38px"></div>
<div class="vl" style="left:1598px;top:691px;height:38px"></div>
<div class="cb dis" style="left:341px;top:695px"></div>
<span class="t " style="left:396px;top:694.49px;font-size:13px;line-height:16px;color:#3a3e45;letter-spacing:0.5px">7</span>
<span class="t " style="left:476px;top:694.49px;font-size:13px;line-height:16px;color:#3a3e45;letter-spacing:0.7px"><span id="n6">Grden waste</span></span>
<div class="ti" style="left:914px;top:692px;width:227px;height:37px"><span class="t " style="left:12.5px;top:10.19px;font-size:13px;line-height:16px;color:#3a3e45"><span class="v0" id="v6_0">0</span></span></div>
<div class="ti" style="left:1142px;top:692px;width:228px;height:37px"><span class="t " style="left:12.5px;top:10.19px;font-size:13px;line-height:16px;color:#3a3e45"><span class="v1" id="v6_1">0</span></span></div>
<div class="ti" style="left:1371px;top:692px;width:227px;height:37px"><span class="t " style="left:12.5px;top:10.19px;font-size:13px;line-height:16px;color:#3a3e45"><span class="v2" id="v6_2">0.00</span></span></div>
<div class="ti" style="left:1599px;top:692px;width:228px;height:37px"><span class="t " style="left:12.5px;top:10.19px;font-size:13px;line-height:16px;color:#3a3e45"><span class="v3" id="v6_3">0.00</span></span></div>
<div class="vl" style="left:394px;top:729px;height:45px"></div>
<div class="vl" style="left:1141px;top:729px;height:45px"></div>
<div class="vl" style="left:1370px;top:729px;height:45px"></div>
<div class="vl" style="left:1598px;top:729px;height:45px"></div>
<span class="t " style="left:324.7px;top:743.69px;font-size:13px;line-height:16px;color:#3a3e45;font-weight:bold">Total:</span>
<span class="t " style="left:408px;top:743.69px;font-size:13px;line-height:16px;color:#3a3e45;font-weight:bold">0</span>
<span class="t " style="left:1154.5px;top:743.69px;font-size:13px;line-height:16px;color:#ef5f68;font-weight:bold;letter-spacing:0.8px">0.00</span>
<span class="t " style="left:1383px;top:743.69px;font-size:13px;line-height:16px;color:#34c07f;font-weight:bold;letter-spacing:0.8px">0.00</span>
<div class="sbtn"><span>START PRODUCTION</span></div>
<!--/MAIN-->
</div>
</body></html>
